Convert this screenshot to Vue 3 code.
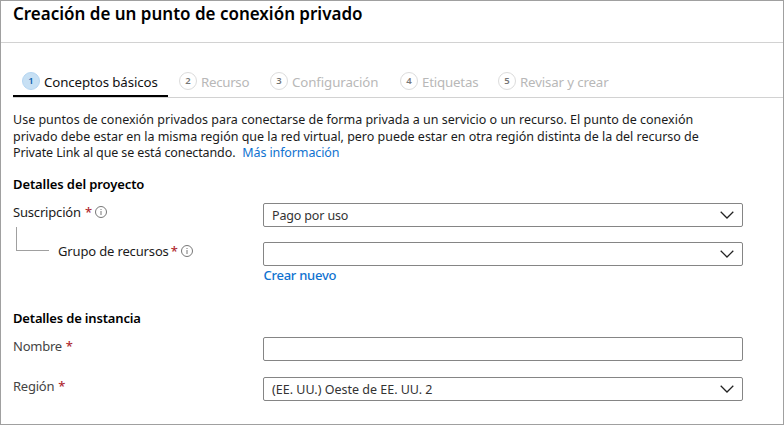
<script setup>
const tabs = [
  { label: 'Conceptos básicos', id: 'basics' },
  { label: 'Recurso', id: 'resource' },
  { label: 'Configuración', id: 'config' },
  { label: 'Etiquetas', id: 'tags' },
  { label: 'Revisar y crear', id: 'review' },
]
</script>

<template>
  <div class="panel">
    <header class="header"><h1 class="title">Creación de un punto de conexión privado</h1></header>
    <nav class="tabs">
      <div v-for="(t, i) in tabs" :key="t.id" class="tab" :class="[t.id, { active: i === 0 }]">
        <span class="num">{{ i + 1 }}</span><span class="tab-label">{{ t.label }}</span>
      </div>
    </nav>
    <main class="content">
      <div class="intro">
        <div><span class="l1">Use puntos de conexión privados para conectarse de forma privada a un servicio o un recurso. El punto de conexión</span></div>
        <div><span class="l2">privado debe estar en la misma región que la red virtual, pero puede estar en otra región distinta de la del recurso de</span></div>
        <div><span class="l3">Private Link al que se está conectando.</span><a class="more">Más información</a></div>
      </div>

      <h2 class="section first"><span class="s1">Detalles del proyecto</span></h2>
      <div class="row subscription">
        <div class="label"><span class="t-sub">Suscripción</span><span class="req">*</span>
          <svg class="info" viewBox="0 0 12 12"><circle cx="6" cy="6" r="5.5" /><path d="M6 5v4M6 3v1" /></svg>
        </div>
        <div class="field"><span class="v-sub">Pago por uso</span>
          <svg class="chev" viewBox="0 0 14 8"><path d="M.7.7 7 7 13.3.7" /></svg>
        </div>
      </div>
      <div class="row group">
        <div class="label nested"><i class="elbow"></i><span class="t-group">Grupo de recursos</span><span class="req">*</span>
          <svg class="info" viewBox="0 0 12 12"><circle cx="6" cy="6" r="5.5" /><path d="M6 5v4M6 3v1" /></svg>
        </div>
        <div class="field">
          <svg class="chev" viewBox="0 0 14 8"><path d="M.7.7 7 7 13.3.7" /></svg>
        </div>
      </div>
      <div class="create"><a class="new">Crear nuevo</a></div>

      <h2 class="section second"><span class="s2">Detalles de instancia</span></h2>
      <div class="row name">
        <div class="label gray"><span class="t-name">Nombre</span><span class="req">*</span></div>
        <div class="field"></div>
      </div>
      <div class="row region">
        <div class="label gray"><span class="t-region">Región</span><span class="req">*</span></div>
        <div class="field"><span class="v-region">(EE. UU.) Oeste de EE. UU. 2</span>
          <svg class="chev" viewBox="0 0 14 8"><path d="M.7.7 7 7 13.3.7" /></svg>
        </div>
      </div>
    </main>
  </div>
</template>

<style>
body { background: #fff; }
</style>

<style scoped>
* { box-sizing: border-box; }
.panel { width: 784px; height: 425px; border: 1px solid #a0a0a0; font: 13px/16px "Noto Sans", sans-serif; color: #1b1b1b; white-space: nowrap; overflow: hidden; }
.header { height: 42px; border-bottom: 1px solid #d2d2d2; padding: 1px 0 0 12px; }
.title { margin: 0; font: 600 17px/24px "Noto Sans", sans-serif; color: #000; letter-spacing: -0.01px; }
.tabs { display: flex; height: 55px; margin-left: 12px; border-bottom: 1px solid #d2d2d2; }
.tab { display: flex; align-items: center; padding: 22px 0 0 9px; height: 54px; font-size: 13.3px; letter-spacing: -0.11px; color: #b8b8b8; }
.tab.active { color: #111; border-bottom: 2px solid #000; padding-top: 24px; }
.tab-label { padding-top: 2px; }
.basics { width: 155px; margin-right: 2px; }
.resource { width: 91px; letter-spacing: -0.3px; }
.config { width: 130px; }
.tags { width: 98px; letter-spacing: -0.2px; }
.review { letter-spacing: -0.15px; }
.num { flex: none; width: 18px; height: 18px; border: 1px solid #dcdcdc; border-radius: 50%; margin-right: 4px; text-align: center; font: 600 9.5px/15px "Noto Sans", sans-serif; letter-spacing: 0; color: #777; }
.active .num { background: #c7e0f4; border-color: #b5d6f2; color: #1464ae; }
.content { padding: 14px 0 0 12px; }
.intro { font-size: 12.5px; line-height: 16.5px; color: #1b1b1b; }
.l2 { letter-spacing: -0.02px; }
.l3 { letter-spacing: -0.12px; }
a { color: #0f72d0; }
.more { margin-left: 7px; letter-spacing: -0.12px; }
.section { margin: 0; font: 600 13px/18px "Noto Sans", sans-serif; color: #000; }
.s1 { letter-spacing: -0.1px; }
.s2 { letter-spacing: -0.17px; }
.first { margin-top: 13px; }
.second { margin-top: 25px; }
.row { display: flex; height: 24px; }
.label { width: 250px; height: 18px; display: flex; align-items: center; }
.gray { color: #444; }
.field { width: 480px; height: 24px; border: 1px solid #858585; border-radius: 2px; padding: 0 8px; display: flex; align-items: center; color: #333; font-size: 12.5px; }
.field span { padding-top: 2px; }
.v-sub { letter-spacing: -0.15px; }
.t-sub { letter-spacing: -0.18px; }
.t-group { letter-spacing: -0.15px; }
.t-name, .t-region { letter-spacing: -0.25px; }
.req { width: 7px; color: #b02a30; margin-left: 4px; font-weight: 500; }
.nested .req { margin-left: 2px; }
.info { width: 12px; height: 12px; margin-left: 3px; fill: none; stroke: #777; stroke-width: 1; }
.chev { width: 14px; height: 8px; margin-left: auto; fill: none; stroke: #222; stroke-width: 1.25; }
.subscription { margin-top: 10px; }
.group { margin-top: 15px; }
.elbow { width: 33px; height: 24px; margin: -24px 9px 0 3px; border: solid #a0a0a0; border-width: 0 0 1px 1px; }
.create { padding-left: 250.5px; height: 18px; line-height: 18px; }
.new { font-weight: 500; letter-spacing: -0.26px; }
.name { margin-top: 10px; }
.region { margin-top: 16px; }
</style>
